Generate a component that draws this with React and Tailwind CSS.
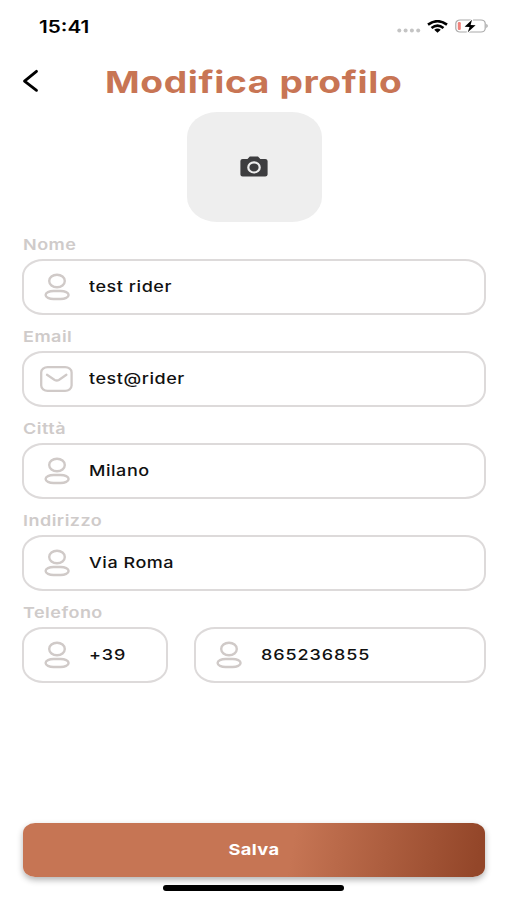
import { useState } from 'react';

function UserIcon() {
  return (
    <svg className="h-[28px] w-[34px] shrink-0" viewBox="0 0 34 28" fill="none" stroke="#d0cac8" strokeWidth="2.4">
      <ellipse cx="17" cy="8" rx="7.8" ry="6.3" />
      <rect x="5.6" y="18" width="23" height="8" rx="8" ry="4" />
    </svg>
  );
}

function MailIcon() {
  return (
    <svg className="h-[28px] w-[34px] shrink-0" viewBox="0 0 34 28" fill="none" stroke="#d0cac8" strokeWidth="2.3">
      <rect x="1.2" y="2.2" width="30.4" height="23.6" rx="6.5" ry="5.2" />
      <path d="M7 9.8 L14.7 14.9 Q16.8 16.1 18.9 14.9 L26.4 9.8" strokeLinecap="round" />
    </svg>
  );
}

function StatusBar() {
  return (
    <div className="flex h-[52px] items-center justify-between pl-[39px] pr-[18px]">
      <span className="origin-left scale-x-[1.22] pt-[2px] text-[17px] font-semibold leading-none">15:41</span>
      <div className="flex items-center">
        <svg className="h-4 w-[24px]" viewBox="0 0 24 16" fill="#c4c4c4">
          <circle cx="2.3" cy="12.5" r="2" />
          <circle cx="8.6" cy="12.5" r="2" />
          <circle cx="14.9" cy="12.5" r="2" />
          <circle cx="21.2" cy="12.5" r="2" />
        </svg>
        <svg className="ml-[6px] h-[13px] w-[21px]" viewBox="0 0 21 13" fill="none" stroke="#000" strokeWidth="2.6">
          <path d="M1 4.6 Q10.5 -2.2 20 4.6" />
          <path d="M4.5 7.9 Q10.5 3.2 16.5 7.9" />
          <path d="M7.2 9.8 Q10.5 7.4 13.8 9.8 L10.5 12.8 Z" fill="#000" stroke="none" />
        </svg>
        <svg className="ml-[7px] h-[14px] w-[34px]" viewBox="0 0 34 14">
          <rect x="0.8" y="1" width="29.4" height="12" rx="4.2" ry="3.5" fill="#fff" stroke="#aaa" strokeWidth="1.2" />
          <path d="M31.4 4.8 Q34 7 31.4 9.2 Z" fill="#999" />
          <rect x="2.8" y="3" width="3" height="8" rx="1.2" fill="#f0837d" />
          <path d="M17 0.8 L9.6 7.8 L14.6 8 L12.8 13.2 L20.6 6.2 L15.6 6 Z" fill="#000" stroke="#fff" strokeWidth="2" paintOrder="stroke" />
        </svg>
      </div>
    </div>
  );
}

function Label({ children }) {
  return (
    <div className="flex h-[36px] items-start pl-[0.5px] pt-[13px]">
      <span className="origin-left scale-x-[1.2] text-[15px] font-semibold leading-[18px] tracking-[0.4px] text-[#cfcbca]">
        {children}
      </span>
    </div>
  );
}

function Input({ icon, value, onChange, className = '', inputClassName = 'tracking-[0.45px]' }) {
  return (
    <div className={`flex h-[56px] min-w-0 items-center overflow-hidden rounded-[21px/17px] border-2 border-[#dddada] pl-[16px] ${className}`}>
      {icon || <UserIcon />}
      <input
        value={value}
        onChange={onChange}
        className={`ml-[15px] w-0 min-w-0 flex-1 origin-left scale-x-[1.2] bg-transparent pb-px text-[15px] font-medium leading-[20px] text-[#111] outline-none ${inputClassName}`}
      />
    </div>
  );
}

export default function App() {
  const [form, setForm] = useState({
    nome: 'test rider',
    email: 'test@rider',
    citta: 'Milano',
    indirizzo: 'Via Roma',
    prefisso: '+39',
    telefono: '865236855',
  });

  const update = (key) => (e) => setForm({ ...form, [key]: e.target.value });

  return (
    <div className="flex h-[900px] w-[507px] flex-col overflow-hidden bg-white font-['Inter',sans-serif] text-black">
      <StatusBar />

      {/* Header */}
      <header className="flex h-[60px] items-center pl-[21px]">
        <button type="button" aria-label="Indietro" className="pb-[3px]">
          <svg className="h-[24px] w-[18px]" viewBox="0 0 18 24" fill="none" stroke="#000" strokeWidth="2.8">
            <path d="M15.5 2.3 L3.5 12.1 L15.5 21.3" strokeLinecap="round" strokeLinejoin="round" />
          </svg>
        </button>
        <h1 className="ml-[66px] origin-left scale-x-[1.24] whitespace-nowrap text-[30px] font-bold leading-[36px] tracking-[0.5px] text-[#c87554]">
          Modifica profilo
        </h1>
      </header>

      {/* Photo */}
      <button type="button" aria-label="Foto" className="ml-[187px] flex h-[110px] w-[135px] items-center justify-center rounded-[30px/25px] bg-[#eeeeee] pb-[2px] pr-[2px]">
        <svg className="h-[21px] w-[28px]" viewBox="0 0 28 21">
          <path d="M2.6 3 H7.5 L9.8 0.6 H18 L20.3 3 H25.2 Q27.6 3 27.6 5 V18.6 Q27.6 20.6 25.2 20.6 H2.6 Q0.4 20.6 0.4 18.6 V5 Q0.4 3 2.6 3 Z" fill="#3d3d3f" />
          <ellipse cx="14" cy="11.4" rx="5.7" ry="5.1" fill="#3d3d3f" stroke="#eee" strokeWidth="2.2" />
        </svg>
      </button>

      {/* Form */}
      <form className="flex flex-col pl-[22px] pr-[21px] pt-px">
        <Label>Nome</Label>
        <Input value={form.nome} onChange={update('nome')} />
        <Label>Email</Label>
        <Input icon={<MailIcon />} value={form.email} onChange={update('email')} />
        <Label>Città</Label>
        <Input value={form.citta} onChange={update('citta')} />
        <Label>Indirizzo</Label>
        <Input value={form.indirizzo} onChange={update('indirizzo')} />
        <Label>Telefono</Label>
        <div className="flex gap-[26px]">
          <Input className="w-[146px] shrink-0" inputClassName="tracking-[0.75px]" value={form.prefisso} onChange={update('prefisso')} />
          <Input className="flex-1" inputClassName="tracking-[0.75px]" value={form.telefono} onChange={update('telefono')} />
        </div>
      </form>

      {/* Footer */}
      <div className="mt-auto flex flex-col items-center pb-[9px]">
        <button
          type="button"
          className="flex h-[54px] w-[462px] items-center justify-center rounded-[12px/10px] bg-[linear-gradient(100deg,#c67554_0%,#c67554_58%,#934629_98%)] shadow-[0_3px_6px_rgba(0,0,0,0.3)]"
        >
          <span className="scale-x-[1.22] text-[15px] font-bold tracking-[0.3px] text-white">Salva</span>
        </button>
        <div className="mt-[8px] h-[6px] w-[181px] rounded-full bg-black" />
      </div>
    </div>
  );
}
